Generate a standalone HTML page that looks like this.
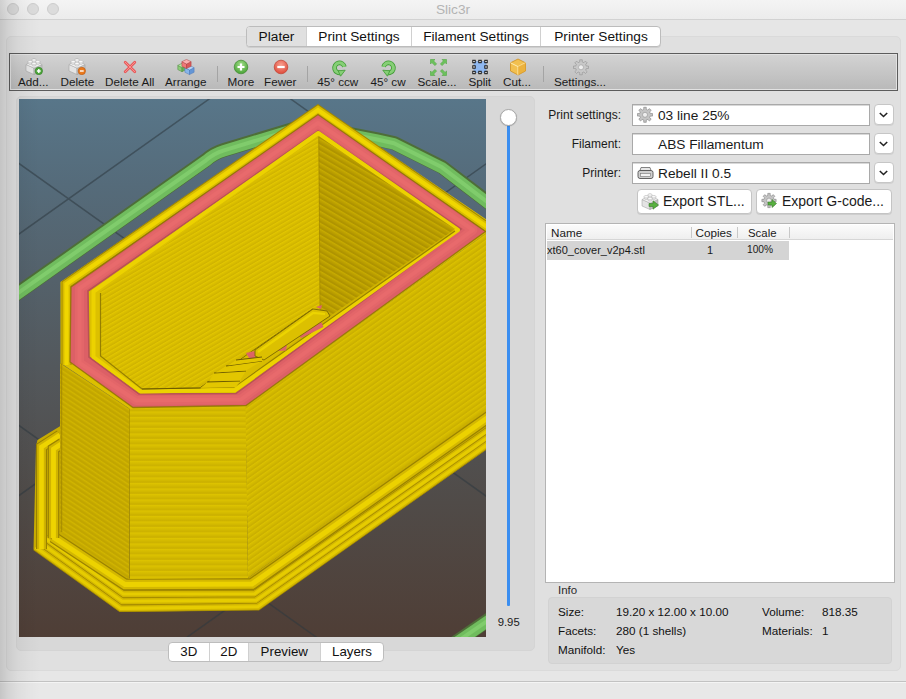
<!DOCTYPE html>
<html><head><meta charset="utf-8">
<style>
*{box-sizing:border-box;margin:0;padding:0}
html,body{width:906px;height:699px;overflow:hidden;background:#e6e6e6;font-family:"Liberation Sans",sans-serif;color:#1a1a1a}
.abs{position:absolute}
#title{left:0;top:0;width:906px;height:20px;background:linear-gradient(#f4f4f4,#ececec);border-bottom:1px solid #d2d2d2}
.tl{position:absolute;top:3px;width:12px;height:12px;border-radius:50%;background:#dcdcdc;border:1px solid #cdcdcd}
#ttext{left:0;width:906px;top:3px;text-align:center;font-size:13.7px;color:#b4b4b4;line-height:14px}
#lshadow{left:0;top:0;width:40px;height:699px;background:linear-gradient(90deg,rgba(0,0,0,.15) 0,rgba(0,0,0,.09) 8px,rgba(0,0,0,.045) 18px,rgba(0,0,0,.015) 30px,rgba(0,0,0,0) 40px);pointer-events:none}
#outer{left:6px;top:36px;width:895px;height:635px;background:#e0e0e0;border:1px solid #dadada;border-radius:5px}
#tabs{left:246px;top:26px;width:414.5px;height:21px;background:#fff;border:1px solid #bcbcbc;border-radius:4px;overflow:hidden;box-shadow:0 1px 0 rgba(0,0,0,.08)}
.tab{position:absolute;top:0;height:19px;font-size:13.7px;line-height:19px;text-align:center;color:#111;border-left:1px solid #d0d0d0}
#toolbar{left:9px;top:53px;width:889px;height:38px;border:1.5px solid #5c5c5c;background:linear-gradient(#d3d3d3,#b9b9b9);box-shadow:inset 0 0 0 1px #e2e2e2}
.tlab{position:absolute;top:75px;font-size:11.7px;line-height:14px;color:#1a1a1a;white-space:nowrap}
.sep{position:absolute;top:66px;width:1px;height:16px;background:#a4a4a4}
#inner{left:16px;top:96px;width:519px;height:555px;background:#d8d8d8;border:1px solid #d4d4d4;border-radius:5px}
#vp{left:19px;top:99px;width:467px;height:538px}
#seg{left:168px;top:642px;width:216px;height:20px;background:#fff;border:1px solid #bdbdbd;border-radius:4px;overflow:hidden}
.sg{position:absolute;top:0;height:18px;font-size:13.3px;line-height:18px;text-align:center;color:#111;border-left:1px solid #d0d0d0}
#bline{left:0;top:681px;width:906px;height:2px;background:linear-gradient(#c2c2c2 50%,#f4f4f4 50%)}
#bottom{left:0;top:683px;width:906px;height:16px;background:#e8e8e8}
.lbl{position:absolute;font-size:12px;line-height:14px;text-align:right;color:#1a1a1a;white-space:nowrap}
.combo{position:absolute;left:632px;width:238px;height:22px;background:#fff;border:1px solid #a9a9a9;box-shadow:inset 0 1px 0 #d8d8d8;font-size:13.7px;line-height:20px;white-space:nowrap}
.ddb{position:absolute;left:873.5px;width:20px;height:21px;background:#fff;border:1px solid #c6c6c6;border-radius:4px;box-shadow:0 1px 0 rgba(0,0,0,.06)}
.btn{position:absolute;top:190px;height:23px;background:#fff;border:1px solid #c4c4c4;border-radius:4px;box-shadow:0 1px 0 rgba(0,0,0,.08);font-size:14px;line-height:22px;white-space:nowrap}
#list{left:545px;top:223px;width:350px;height:360px;background:#fff;border:1px solid #b4b4b4}
.hd{position:absolute;top:241px;height:1px}
.inf{position:absolute;font-size:11.7px;line-height:14px;color:#111;white-space:nowrap}
</style></head><body>
<div id="title" class="abs">
 <div class="tl" style="left:7px"></div><div class="tl" style="left:27px"></div><div class="tl" style="left:47px"></div>
 <div id="ttext" class="abs">Slic3r</div>
</div>
<div id="outer" class="abs"></div>
<div id="tabs" class="abs">
 <div class="tab" style="left:0;width:59px;background:#e0e0e0;border-left:none">Plater</div>
 <div class="tab" style="left:59px;width:105px">Print Settings</div>
 <div class="tab" style="left:164px;width:129px">Filament Settings</div>
 <div class="tab" style="left:293px;width:121px">Printer Settings</div>
</div>
<div id="toolbar" class="abs"></div>
<svg class="abs" style="left:25px;top:57.5px" width="18" height="17" viewBox="0 0 18 17">
<path d="M1,6.5 L9,10 L9,16.5 L1,13Z" fill="#e4e4e4" stroke="#9a9a9a" stroke-width="0.5"/>
<path d="M9,10 L17,6.5 L17,13 L9,16.5Z" fill="#c4c4c4" stroke="#9a9a9a" stroke-width="0.5"/>
<path d="M1,6.5 L9,3 L17,6.5 L9,10Z" fill="#f6f6f6" stroke="#a8a8a8" stroke-width="0.5"/>
<path d="M6.9,3.6 V2.0 A2.1,1.1 0 0 1 11.1,2.0 V3.6 A2.1,1.1 0 0 1 6.9,3.6Z" fill="#e8e8e8" stroke="#a0a0a0" stroke-width="0.45"/><ellipse cx="9" cy="2.0" rx="2.1" ry="1.1" fill="#fdfdfd" stroke="#b0b0b0" stroke-width="0.4"/><path d="M3.1,5.3 V3.6999999999999997 A2.1,1.1 0 0 1 7.300000000000001,3.6999999999999997 V5.3 A2.1,1.1 0 0 1 3.1,5.3Z" fill="#e8e8e8" stroke="#a0a0a0" stroke-width="0.45"/><ellipse cx="5.2" cy="3.6999999999999997" rx="2.1" ry="1.1" fill="#fdfdfd" stroke="#b0b0b0" stroke-width="0.4"/><path d="M10.700000000000001,5.3 V3.6999999999999997 A2.1,1.1 0 0 1 14.9,3.6999999999999997 V5.3 A2.1,1.1 0 0 1 10.700000000000001,5.3Z" fill="#e8e8e8" stroke="#a0a0a0" stroke-width="0.45"/><ellipse cx="12.8" cy="3.6999999999999997" rx="2.1" ry="1.1" fill="#fdfdfd" stroke="#b0b0b0" stroke-width="0.4"/><path d="M6.9,7.0 V5.4 A2.1,1.1 0 0 1 11.1,5.4 V7.0 A2.1,1.1 0 0 1 6.9,7.0Z" fill="#e8e8e8" stroke="#a0a0a0" stroke-width="0.45"/><ellipse cx="9" cy="5.4" rx="2.1" ry="1.1" fill="#fdfdfd" stroke="#b0b0b0" stroke-width="0.4"/><circle cx="13.8" cy="13" r="3.7" fill="#4fa83c" stroke="#2f7a24" stroke-width="0.6"/><path d="M11.9,13 H15.7 M13.8,11.1 V14.9" stroke="#fff" stroke-width="1.4"/></svg>
<svg class="abs" style="left:68px;top:57.5px" width="18" height="17" viewBox="0 0 18 17">
<path d="M1,6.5 L9,10 L9,16.5 L1,13Z" fill="#e4e4e4" stroke="#9a9a9a" stroke-width="0.5"/>
<path d="M9,10 L17,6.5 L17,13 L9,16.5Z" fill="#c4c4c4" stroke="#9a9a9a" stroke-width="0.5"/>
<path d="M1,6.5 L9,3 L17,6.5 L9,10Z" fill="#f6f6f6" stroke="#a8a8a8" stroke-width="0.5"/>
<path d="M6.9,3.6 V2.0 A2.1,1.1 0 0 1 11.1,2.0 V3.6 A2.1,1.1 0 0 1 6.9,3.6Z" fill="#e8e8e8" stroke="#a0a0a0" stroke-width="0.45"/><ellipse cx="9" cy="2.0" rx="2.1" ry="1.1" fill="#fdfdfd" stroke="#b0b0b0" stroke-width="0.4"/><path d="M3.1,5.3 V3.6999999999999997 A2.1,1.1 0 0 1 7.300000000000001,3.6999999999999997 V5.3 A2.1,1.1 0 0 1 3.1,5.3Z" fill="#e8e8e8" stroke="#a0a0a0" stroke-width="0.45"/><ellipse cx="5.2" cy="3.6999999999999997" rx="2.1" ry="1.1" fill="#fdfdfd" stroke="#b0b0b0" stroke-width="0.4"/><path d="M10.700000000000001,5.3 V3.6999999999999997 A2.1,1.1 0 0 1 14.9,3.6999999999999997 V5.3 A2.1,1.1 0 0 1 10.700000000000001,5.3Z" fill="#e8e8e8" stroke="#a0a0a0" stroke-width="0.45"/><ellipse cx="12.8" cy="3.6999999999999997" rx="2.1" ry="1.1" fill="#fdfdfd" stroke="#b0b0b0" stroke-width="0.4"/><path d="M6.9,7.0 V5.4 A2.1,1.1 0 0 1 11.1,5.4 V7.0 A2.1,1.1 0 0 1 6.9,7.0Z" fill="#e8e8e8" stroke="#a0a0a0" stroke-width="0.45"/><ellipse cx="9" cy="5.4" rx="2.1" ry="1.1" fill="#fdfdfd" stroke="#b0b0b0" stroke-width="0.4"/><circle cx="13.8" cy="13" r="3.7" fill="#ea7a1c" stroke="#b85810" stroke-width="0.6"/><path d="M11.9,13 H15.7" stroke="#fff" stroke-width="1.4"/></svg>
<svg class="abs" style="left:123px;top:60px" width="14" height="14" viewBox="0 0 14 14"><path d="M2.2,2.2 L11.8,11.8 M11.8,2.2 L2.2,11.8" stroke="#e85a5a" stroke-width="2.8" stroke-linecap="round"/><path d="M2.2,2.2 L11.8,11.8 M11.8,2.2 L2.2,11.8" stroke="#f89090" stroke-width="1" stroke-linecap="round"/></svg>
<svg class="abs" style="left:177px;top:59px" width="19" height="17" viewBox="0 0 19 17"><path d="M5,8.5 L0.7999999999999998,6.4 L0.7999999999999998,10.6 L5,12.7Z" fill="#8ccc78" stroke="#4a8a3a" stroke-width="0.5"/><path d="M5,8.5 L9.2,6.4 L9.2,10.6 L5,12.7Z" fill="#6aae58" stroke="#4a8a3a" stroke-width="0.5"/><path d="M5,8.5 L0.7999999999999998,6.4 L5,4.3 L9.2,6.4Z" fill="#b8e6a8" stroke="#4a8a3a" stroke-width="0.5"/><path d="M12.5,11 L7.9,8.7 L7.9,13.3 L12.5,15.6Z" fill="#88b6ea" stroke="#4a78b8" stroke-width="0.5"/><path d="M12.5,11 L17.1,8.7 L17.1,13.3 L12.5,15.6Z" fill="#6496d6" stroke="#4a78b8" stroke-width="0.5"/><path d="M12.5,11 L7.9,8.7 L12.5,6.4 L17.1,8.7Z" fill="#b4d4f6" stroke="#4a78b8" stroke-width="0.5"/><path d="M9.5,5 L4.9,2.7 L4.9,7.3 L9.5,9.6Z" fill="#f07878" stroke="#b04040" stroke-width="0.5"/><path d="M9.5,5 L14.1,2.7 L14.1,7.3 L9.5,9.6Z" fill="#d85858" stroke="#b04040" stroke-width="0.5"/><path d="M9.5,5 L4.9,2.7 L9.5,0.40000000000000036 L14.1,2.7Z" fill="#fab0b0" stroke="#b04040" stroke-width="0.5"/></svg>
<div class="sep" style="left:217px"></div>
<svg class="abs" style="left:233px;top:59px" width="16" height="16" viewBox="0 0 16 16"><defs><radialGradient id="gm" cx="0.5" cy="0.35" r="0.6"><stop offset="0" stop-color="#a6e08e"/><stop offset="1" stop-color="#4ea63a"/></radialGradient></defs><circle cx="8" cy="8" r="6.8" fill="url(#gm)" stroke="#3f8a30" stroke-width="0.7"/><path d="M4.5,8 H11.5 M8,4.5 V11.5" stroke="#fff" stroke-width="2.2"/></svg>
<svg class="abs" style="left:273px;top:59px" width="16" height="16" viewBox="0 0 16 16"><defs><radialGradient id="rm" cx="0.5" cy="0.35" r="0.6"><stop offset="0" stop-color="#f8a090"/><stop offset="1" stop-color="#e05040"/></radialGradient></defs><circle cx="8" cy="8" r="6.8" fill="url(#rm)" stroke="#c04030" stroke-width="0.7"/><path d="M4.3,8 H11.7" stroke="#fff" stroke-width="2.2"/></svg>
<div class="sep" style="left:307px"></div>
<svg class="abs" style="left:331px;top:59.5px" width="16" height="17" viewBox="0 0 16 17"><path d="M13.4,6.8 A5,5 0 1 0 10.1,12.6" stroke="#3f9a34" stroke-width="4.6" fill="none"/><path d="M13.4,6.8 A5,5 0 1 0 10.1,12.6" stroke="#86cf76" stroke-width="3" fill="none"/><path d="M7.2,10.8 L14.2,10.2 L9.6,16.2Z" fill="#86cf76" stroke="#3f9a34" stroke-width="0.8" stroke-linejoin="round"/></svg>
<svg class="abs" style="left:381px;top:59.5px" width="16" height="17" viewBox="0 0 16 17"><g transform="translate(16,0) scale(-1,1)"><path d="M13.4,6.8 A5,5 0 1 0 10.1,12.6" stroke="#3f9a34" stroke-width="4.6" fill="none"/><path d="M13.4,6.8 A5,5 0 1 0 10.1,12.6" stroke="#86cf76" stroke-width="3" fill="none"/><path d="M7.2,10.8 L14.2,10.2 L9.6,16.2Z" fill="#86cf76" stroke="#3f9a34" stroke-width="0.8" stroke-linejoin="round"/></g></svg>
<svg class="abs" style="left:429.5px;top:58.5px" width="17" height="17" viewBox="0 0 17 17">
<g><path d="M0.5,0.5 H5 L3.6,1.9 L6.6,4.9 L4.9,6.6 L1.9,3.6 L0.5,5Z" fill="#6cc25c" stroke="#52a844" stroke-width="0.6" stroke-linejoin="round"/></g><g transform="translate(17,0) scale(-1,1)"><path d="M0.5,0.5 H5 L3.6,1.9 L6.6,4.9 L4.9,6.6 L1.9,3.6 L0.5,5Z" fill="#6cc25c" stroke="#52a844" stroke-width="0.6" stroke-linejoin="round"/></g><g transform="translate(0,17) scale(1,-1)"><path d="M0.5,0.5 H5 L3.6,1.9 L6.6,4.9 L4.9,6.6 L1.9,3.6 L0.5,5Z" fill="#6cc25c" stroke="#52a844" stroke-width="0.6" stroke-linejoin="round"/></g><g transform="translate(17,17) scale(-1,-1)"><path d="M0.5,0.5 H5 L3.6,1.9 L6.6,4.9 L4.9,6.6 L1.9,3.6 L0.5,5Z" fill="#6cc25c" stroke="#52a844" stroke-width="0.6" stroke-linejoin="round"/></g></svg>
<svg class="abs" style="left:472px;top:59px" width="16" height="16" viewBox="0 0 16 16"><rect x="2" y="2.5" width="12" height="11" fill="#8fb8f0" stroke="#6a90c8" stroke-width="0.5"/>
<g fill="#fff" stroke="#111" stroke-width="1"><rect x="0.8" y="1.3" width="2.4" height="2.4"/><rect x="6.8" y="1.3" width="2.4" height="2.4"/><rect x="12.8" y="1.3" width="2.4" height="2.4"/><rect x="0.8" y="6.8" width="2.4" height="2.4"/><rect x="12.8" y="6.8" width="2.4" height="2.4"/><rect x="0.8" y="12.3" width="2.4" height="2.4"/><rect x="6.8" y="12.3" width="2.4" height="2.4"/><rect x="12.8" y="12.3" width="2.4" height="2.4"/></g></svg>
<svg class="abs" style="left:509px;top:58px" width="18" height="18" viewBox="0 0 18 18"><path d="M9,1 L16.5,4.8 L16.5,13 L9,17 L1.5,13 L1.5,4.8Z" fill="#f2c050" stroke="#d09020" stroke-width="0.8"/><path d="M1.5,4.8 L9,8.6 L16.5,4.8 M9,8.6 V17" stroke="#fff2c0" stroke-width="0.9" fill="none"/><path d="M9,8.6 L16.5,4.8 L16.5,13 L9,17Z" fill="#e8a830" opacity="0.6"/></svg>
<div class="sep" style="left:543px"></div>
<svg class="abs" style="left:0;top:0;overflow:visible" width="1" height="1"><path d="M588.49,66.01 L588.49,68.59 L586.34,68.51 L585.63,70.22 L587.21,71.69 L585.39,73.51 L583.92,71.93 L582.21,72.64 L582.29,74.79 L579.71,74.79 L579.79,72.64 L578.08,71.93 L576.61,73.51 L574.79,71.69 L576.37,70.22 L575.66,68.51 L573.51,68.59 L573.51,66.01 L575.66,66.09 L576.37,64.38 L574.79,62.91 L576.61,61.09 L578.08,62.67 L579.79,61.96 L579.71,59.81 L582.29,59.81 L582.21,61.96 L583.92,62.67 L585.39,61.09 L587.21,62.91 L585.63,64.38 L586.34,66.09Z" fill="#c8c8c8" stroke="#9a9a9a" stroke-width="0.7"/><circle cx="581" cy="67.3" r="2.51" fill="#eeeeee" stroke="#9a9a9a" stroke-width="0.6"/></svg>
<div class="tlab" style="left:17px;width:32.5px;text-align:center">Add...</div>
<div class="tlab" style="left:60.5px;width:33px;text-align:center">Delete</div>
<div class="tlab" style="left:105px;width:49px;text-align:center">Delete All</div>
<div class="tlab" style="left:165px;width:41px;text-align:center">Arrange</div>
<div class="tlab" style="left:227.5px;width:26.5px;text-align:center">More</div>
<div class="tlab" style="left:264px;width:32.5px;text-align:center">Fewer</div>
<div class="tlab" style="left:316.5px;width:42.5px;text-align:center">45° ccw</div>
<div class="tlab" style="left:370px;width:36px;text-align:center">45° cw</div>
<div class="tlab" style="left:417.5px;width:38px;text-align:center">Scale...</div>
<div class="tlab" style="left:468px;width:23.5px;text-align:center">Split</div>
<div class="tlab" style="left:502px;width:30px;text-align:center">Cut...</div>
<div class="tlab" style="left:553px;width:54px;text-align:center">Settings...</div>
<div id="inner" class="abs"></div>
<svg id="vp" class="abs" viewBox="19 99 467 538" width="467" height="538">
<defs>
<linearGradient id="bg" x1="0" y1="99" x2="0" y2="637" gradientUnits="userSpaceOnUse">
<stop offset="0" stop-color="#587689"/><stop offset="0.16" stop-color="#556b7a"/><stop offset="0.5" stop-color="#53585c"/><stop offset="0.75" stop-color="#504b48"/><stop offset="1" stop-color="#4f3e36"/>
</linearGradient>
<pattern id="stH" width="50" height="5.5" patternUnits="userSpaceOnUse" patternTransform="translate(0,405) skewY(0.00)">
<rect width="50" height="5.5" fill="url(#stHg)"/></pattern>
<linearGradient id="stHg" x1="0" y1="0" x2="0" y2="1">
<stop offset="0" stop-color="#c2a600"/><stop offset="0.2" stop-color="#dec400"/><stop offset="0.7" stop-color="#d2b800"/><stop offset="0.88" stop-color="#d2b800"/><stop offset="1" stop-color="#c2a600"/></linearGradient>
<pattern id="stR" width="50" height="5.5" patternUnits="userSpaceOnUse" patternTransform="translate(0,405) skewY(-35.15)">
<rect width="50" height="5.5" fill="url(#stRg)"/></pattern>
<linearGradient id="stRg" x1="0" y1="0" x2="0" y2="1">
<stop offset="0" stop-color="#c0a400"/><stop offset="0.2" stop-color="#dcc200"/><stop offset="0.7" stop-color="#d0b600"/><stop offset="0.88" stop-color="#d0b600"/><stop offset="1" stop-color="#c0a400"/></linearGradient>
<pattern id="stL" width="50" height="5.0" patternUnits="userSpaceOnUse" patternTransform="translate(0,363) skewY(33.42)">
<rect width="50" height="5.0" fill="url(#stLg)"/></pattern>
<linearGradient id="stLg" x1="0" y1="0" x2="0" y2="1">
<stop offset="0" stop-color="#b29600"/><stop offset="0.2" stop-color="#d4b800"/><stop offset="0.7" stop-color="#c4a800"/><stop offset="0.88" stop-color="#c4a800"/><stop offset="1" stop-color="#b29600"/></linearGradient>
<pattern id="stIL" width="50" height="4.6" patternUnits="userSpaceOnUse" patternTransform="translate(0,0) skewY(-30.11)">
<rect width="50" height="4.6" fill="url(#stILg)"/></pattern>
<linearGradient id="stILg" x1="0" y1="0" x2="0" y2="1">
<stop offset="0" stop-color="#bc9f00"/><stop offset="0.2" stop-color="#e4c800"/><stop offset="0.7" stop-color="#d8bc00"/><stop offset="0.88" stop-color="#d8bc00"/><stop offset="1" stop-color="#bc9f00"/></linearGradient>
<pattern id="stIR" width="50" height="6.0" patternUnits="userSpaceOnUse" patternTransform="translate(0,0) skewY(30.11)">
<rect width="50" height="6.0" fill="url(#stIRg)"/></pattern>
<linearGradient id="stIRg" x1="0" y1="0" x2="0" y2="1">
<stop offset="0" stop-color="#9e8400"/><stop offset="0.2" stop-color="#c8ac00"/><stop offset="0.7" stop-color="#b69a00"/><stop offset="0.88" stop-color="#b69a00"/><stop offset="1" stop-color="#9e8400"/></linearGradient>
</defs>
<rect x="19" y="99" width="467" height="538" fill="url(#bg)"/>
<path d="M0,-108 L520,262.2 M0,150 L520,520.2 M0,412 L520,782.2 M0,247.5 L520,-121.7 M0,509 L520,139.8 M0,770 L520,400.8" stroke="#2e3840" stroke-opacity="0.55" stroke-width="1.5" fill="none"/>
<path d="M5,302 L206,160 Q214,153 224,150 L300,127 L340,132 L376,139 L394,143 L442,167 L510,219" stroke="#4e6e38" stroke-width="14" fill="none" stroke-linejoin="round"/>
<path d="M5,302 L206,160 Q214,153 224,150 L300,127 L340,132 L376,139 L394,143 L442,167 L510,219" stroke="#70bc5e" stroke-width="11.5" fill="none" stroke-linejoin="round" transform="translate(0,0.8)"/>
<path d="M5,302 L206,160 Q214,153 224,150 L300,127 L340,132 L376,139 L394,143 L442,167 L510,219" stroke="#80cc6c" stroke-width="4" fill="none" stroke-linejoin="round" transform="translate(0,0.3)"/>
<path d="M430,660 L500,612" stroke="#4e6e38" stroke-width="14" fill="none"/>
<path d="M430,660 L500,612" stroke="#70bc5e" stroke-width="11.5" fill="none" transform="translate(0,0.8)"/>
<path d="M430,660 L500,612" stroke="#80cc6c" stroke-width="4" fill="none" transform="translate(0,0.3)"/>
<polygon points="37.5,440.0 62.0,425.0 62.0,530.0 129.0,578.0 248.0,578.0 500.0,399.0 500.0,440.0 258.5,610.0 120.0,612.0 33.5,549.5 36.0,446.0" fill="#c8ac00"/>
<path d="M45.1,538.2 L123.3,594.0 L254.8,593.7 L500.0,422.0" stroke="#a48a00" stroke-width="7.4" fill="none" stroke-linejoin="miter" /><path d="M45.1,538.2 L123.3,594.0 L254.8,593.7 L500.0,422.0" stroke="#d2b600" stroke-width="5.92" fill="none" stroke-linejoin="miter" /><path d="M45.1,538.2 L123.3,594.0 L254.8,593.7 L500.0,422.0" stroke="#e6cc00" stroke-width="3.11" fill="none" stroke-linejoin="miter" />
<path d="M40.4,542.8 L122.0,601.2 L256.2,600.2 L500.0,428.8" stroke="#a48a00" stroke-width="7.4" fill="none" stroke-linejoin="miter" /><path d="M40.4,542.8 L122.0,601.2 L256.2,600.2 L500.0,428.8" stroke="#d2b600" stroke-width="5.92" fill="none" stroke-linejoin="miter" /><path d="M40.4,542.8 L122.0,601.2 L256.2,600.2 L500.0,428.8" stroke="#e6cc00" stroke-width="3.11" fill="none" stroke-linejoin="miter" />
<path d="M35.6,547.2 L120.7,608.4 L257.8,606.7 L500.0,435.6" stroke="#a48a00" stroke-width="7.4" fill="none" stroke-linejoin="miter" /><path d="M35.6,547.2 L120.7,608.4 L257.8,606.7 L500.0,435.6" stroke="#d2b600" stroke-width="5.92" fill="none" stroke-linejoin="miter" /><path d="M35.6,547.2 L120.7,608.4 L257.8,606.7 L500.0,435.6" stroke="#e6cc00" stroke-width="3.11" fill="none" stroke-linejoin="miter" />
<path d="M41.5,549 L41.5,447 L60,435" stroke="#9a8200" stroke-width="11" fill="none" stroke-linejoin="miter" /><path d="M41.5,549 L41.5,447 L60,435" stroke="#d0b400" stroke-width="8.80" fill="none" stroke-linejoin="miter" /><path d="M41.5,549 L41.5,447 L60,435" stroke="#eed400" stroke-width="4.62" fill="none" stroke-linejoin="miter" />
<path d="M53,537 L125,584.5 L252,584 L500,409" stroke="#9a8200" stroke-width="12" fill="none" stroke-linejoin="miter" /><path d="M53,537 L125,584.5 L252,584 L500,409" stroke="#d4b800" stroke-width="9.60" fill="none" stroke-linejoin="miter" /><path d="M53,537 L125,584.5 L252,584 L500,409" stroke="#ecd200" stroke-width="5.04" fill="none" stroke-linejoin="miter" />
<path d="M53.5,538 L53.5,449 L62,443.5" stroke="#9a8200" stroke-width="11.5" fill="none" stroke-linejoin="miter" /><path d="M53.5,538 L53.5,449 L62,443.5" stroke="#d0b400" stroke-width="9.20" fill="none" stroke-linejoin="miter" /><path d="M53.5,538 L53.5,449 L62,443.5" stroke="#eed400" stroke-width="4.83" fill="none" stroke-linejoin="miter" />
<polygon points="60.0,363.0 130.0,409.0 129.0,579.0 60.0,532.0" fill="url(#stL)"/>
<polygon points="129.5,408.0 246.0,406.0 248.0,578.0 129.5,579.0" fill="url(#stH)"/>
<polygon points="245.5,406.0 496.0,226.0 496.0,403.0 248.0,578.0" fill="url(#stR)"/>
<path d="M129.5,408 L129.5,579" stroke="#a88e00" stroke-width="1" opacity="0.6"/>
<path d="M61.5,363 L61.5,532" stroke="#a08600" stroke-width="1.5" opacity="0.7"/>
<polygon points="60.5,282.0 318.0,105.0 496.0,226.0 246.0,406.0 130.0,409.0 60.5,363.0" fill="#dcc000"/>
<path d="M66.5,365 L66.5,284 L318,110 L500,236" stroke="#a08700" stroke-width="10" fill="none" stroke-linejoin="miter" /><path d="M66.5,365 L66.5,284 L318,110 L500,236" stroke="#d8bc00" stroke-width="8.00" fill="none" stroke-linejoin="miter" /><path d="M66.5,365 L66.5,284 L318,110 L500,236" stroke="#f0d600" stroke-width="4.20" fill="none" stroke-linejoin="miter" />
<polygon points="71.0,287.0 318.0,114.5 485.5,231.5 246.0,405.5 133.0,407.5 70.0,362.0" fill="#dc6066"/>
<path d="M79.5,363 L79.5,288.5 L318,122.8 L473,230 L241,399.5 L136,400.5 Z" stroke="#e36669" stroke-width="9" fill="none" stroke-linejoin="round"/>
<path d="M79.5,363 L79.5,288.5 L318,122.8 L473,230 L241,399.5 L136,400.5 Z" stroke="#e86a6c" stroke-width="4" fill="none" stroke-linejoin="round"/>
<polygon points="71.0,287.0 318.0,114.5 485.5,231.5 246.0,405.5 133.0,407.5 70.0,362.0" fill="none" stroke="#8c7200" stroke-width="1.3" stroke-opacity="0.8"/>
<polygon points="88.0,291.0 318.0,131.0 461.0,229.0 236.0,393.5 139.0,394.0 89.0,357.0" fill="#dcc000" stroke="#b85254" stroke-width="1.6"/>
<path d="M93.5,357 L93.5,291.5 L318.3,133 L458,230 L235,390 L140.5,391.5 Z" stroke="#ecd200" stroke-width="4" fill="none" stroke-linejoin="round"/>
<polygon points="100.0,292.0 318.5,136.0 455.0,231.0 234.0,387.0 142.0,389.0 100.0,356.0" fill="#d0b400"/>
<polygon points="100.0,292.0 318.5,136.0 320.0,309.0 200.0,388.0 142.0,389.0 100.0,356.0" fill="url(#stIL)"/>
<polygon points="318.5,136.0 455.0,229.0 320.0,323.0" fill="url(#stIR)"/>
<path d="M100.5,293 L100.5,356 L142,389 L234,387 L455,231" stroke="#8a7400" stroke-width="1.2" fill="none" opacity="0.85"/>
<path d="M142,389 L200,388 L313,309" stroke="#6e5c00" stroke-width="1.2" fill="none"/>
<path d="M318.8,137 L320,309" stroke="#a08600" stroke-width="1" fill="none" opacity="0.6"/>
<polygon points="200.0,388.0 313.0,309.0 320.0,309.0 320.0,323.0 234.0,387.0" fill="#d8bc00"/>
<polygon points="246.0,353.0 254.6,351.0 256.0,358.7 249.6,359.0" fill="#dc6468"/>
<polygon points="277.8,344.7 287.7,341.0 286.0,350.5 277.0,351.0" fill="#dc6468"/>
<polygon points="297.6,333.0 320.8,321.0 323.5,327.0 301.0,338.0" fill="#dc6468"/>
<polygon points="316.0,307.0 322.0,305.0 321.0,309.0" fill="#dc6468"/>
<polygon points="255.0,350.0 313.0,309.0 327.0,311.0 330.0,316.0 264.0,360.0 255.0,356.0" fill="#dcc000" stroke="#7a6600" stroke-width="0.9"/>
<path d="M258,352 L313,313 L325,314" stroke="#ecd400" stroke-width="2.2" fill="none"/>
<polygon points="202.0,387.5 236.0,387.0 240.0,381.0 207.0,382.0" fill="#e2c600"/>
<path d="M207,382 L240,381" stroke="#6e5c00" stroke-width="1" fill="none"/>
<polygon points="209.0,381.0 240.0,380.5 246.0,371.0 214.0,373.0" fill="#e2c600"/>
<path d="M214,373 L246,371" stroke="#6e5c00" stroke-width="1" fill="none"/>
<polygon points="216.0,372.5 246.0,370.5 262.0,361.0 226.0,366.0" fill="#e2c600"/>
<path d="M226,366 L262,361" stroke="#6e5c00" stroke-width="1" fill="none"/>
<polygon points="228.0,365.5 262.0,361.0 262.0,357.0 236.0,360.0" fill="#e2c600"/>
<path d="M236,360 L262,357" stroke="#6e5c00" stroke-width="1" fill="none"/>
</svg>
<div class="abs" style="left:507px;top:118px;width:3px;height:488px;background:#3b8ef0;border-radius:1px"></div>
<div class="abs" style="left:500px;top:109px;width:17px;height:17px;border-radius:50%;background:#fff;border:1px solid #a8a8a8;box-shadow:0 0.5px 1px rgba(0,0,0,.2)"></div>
<div class="abs" style="left:497.7px;top:615px;font-size:11.3px;line-height:14px">9.95</div>
<div id="seg" class="abs">
 <div class="sg" style="left:0;width:39.5px;border-left:none">3D</div>
 <div class="sg" style="left:39.5px;width:39.5px">2D</div>
 <div class="sg" style="left:79px;width:71.5px;background:#e2e2e2">Preview</div>
 <div class="sg" style="left:150.5px;width:64px">Layers</div>
</div>
<div class="lbl" style="left:520px;width:101px;top:108px">Print settings:</div>
<div class="lbl" style="left:520px;width:101px;top:137px">Filament:</div>
<div class="lbl" style="left:520px;width:101px;top:166px">Printer:</div>
<div class="combo" style="top:104px;padding-left:25px;padding-top:1px">03 line 25%</div>
<div class="ddb" style="top:104px"><svg width="17" height="18" viewBox="0 0 17 18"><path d="M4.8,8 L8.5,11.5 L12.2,8" stroke="#222" stroke-width="1.6" fill="none"/></svg></div>
<div class="combo" style="top:133px;padding-left:25px;padding-top:1px">ABS Fillamentum</div>
<div class="ddb" style="top:133px"><svg width="17" height="18" viewBox="0 0 17 18"><path d="M4.8,8 L8.5,11.5 L12.2,8" stroke="#222" stroke-width="1.6" fill="none"/></svg></div>
<div class="combo" style="top:162px;padding-left:25px;padding-top:1px">Rebell II 0.5</div>
<div class="ddb" style="top:162px"><svg width="17" height="18" viewBox="0 0 17 18"><path d="M4.8,8 L8.5,11.5 L12.2,8" stroke="#222" stroke-width="1.6" fill="none"/></svg></div>
<svg class="abs" style="left:0;top:0;overflow:visible" width="1" height="1"><path d="M652.49,113.51 L652.49,116.09 L650.34,116.01 L649.63,117.72 L651.21,119.19 L649.39,121.01 L647.92,119.43 L646.21,120.14 L646.29,122.29 L643.71,122.29 L643.79,120.14 L642.08,119.43 L640.61,121.01 L638.79,119.19 L640.37,117.72 L639.66,116.01 L637.51,116.09 L637.51,113.51 L639.66,113.59 L640.37,111.88 L638.79,110.41 L640.61,108.59 L642.08,110.17 L643.79,109.46 L643.71,107.31 L646.29,107.31 L646.21,109.46 L647.92,110.17 L649.39,108.59 L651.21,110.41 L649.63,111.88 L650.34,113.59Z" fill="#c4c4c4" stroke="#8c8c8c" stroke-width="0.7"/><circle cx="645" cy="114.8" r="2.51" fill="#eeeeee" stroke="#8c8c8c" stroke-width="0.6"/></svg>
<svg class="abs" style="left:637px;top:166px" width="17" height="14" viewBox="0 0 17 14"><path d="M4,1.5 H13 L14,4.5 H3Z" fill="#e6e6e6" stroke="#666" stroke-width="0.8"/><rect x="1" y="4.5" width="15" height="8" rx="2" fill="#d0d0d0" stroke="#555" stroke-width="0.9"/><rect x="3.5" y="7.5" width="10" height="3" fill="#f4f4f4" stroke="#777" stroke-width="0.6"/></svg>
<div class="btn" style="left:637px;width:115px;padding-left:25px;top:189px;height:24.5px;line-height:22px">Export STL...</div>
<div class="btn" style="left:756px;width:136px;padding-left:25px;top:189px;height:24.5px;line-height:22px">Export G-code...</div>
<svg class="abs" style="left:641px;top:192.5px" width="18" height="17" viewBox="0 0 18 17">
<path d="M1,6.5 L9,10 L9,16.5 L1,13Z" fill="#e4e4e4" stroke="#9a9a9a" stroke-width="0.5"/>
<path d="M9,10 L17,6.5 L17,13 L9,16.5Z" fill="#c4c4c4" stroke="#9a9a9a" stroke-width="0.5"/>
<path d="M1,6.5 L9,3 L17,6.5 L9,10Z" fill="#f6f6f6" stroke="#a8a8a8" stroke-width="0.5"/>
<path d="M6.9,3.6 V2.0 A2.1,1.1 0 0 1 11.1,2.0 V3.6 A2.1,1.1 0 0 1 6.9,3.6Z" fill="#e8e8e8" stroke="#a0a0a0" stroke-width="0.45"/><ellipse cx="9" cy="2.0" rx="2.1" ry="1.1" fill="#fdfdfd" stroke="#b0b0b0" stroke-width="0.4"/><path d="M3.1,5.3 V3.6999999999999997 A2.1,1.1 0 0 1 7.300000000000001,3.6999999999999997 V5.3 A2.1,1.1 0 0 1 3.1,5.3Z" fill="#e8e8e8" stroke="#a0a0a0" stroke-width="0.45"/><ellipse cx="5.2" cy="3.6999999999999997" rx="2.1" ry="1.1" fill="#fdfdfd" stroke="#b0b0b0" stroke-width="0.4"/><path d="M10.700000000000001,5.3 V3.6999999999999997 A2.1,1.1 0 0 1 14.9,3.6999999999999997 V5.3 A2.1,1.1 0 0 1 10.700000000000001,5.3Z" fill="#e8e8e8" stroke="#a0a0a0" stroke-width="0.45"/><ellipse cx="12.8" cy="3.6999999999999997" rx="2.1" ry="1.1" fill="#fdfdfd" stroke="#b0b0b0" stroke-width="0.4"/><path d="M6.9,7.0 V5.4 A2.1,1.1 0 0 1 11.1,5.4 V7.0 A2.1,1.1 0 0 1 6.9,7.0Z" fill="#e8e8e8" stroke="#a0a0a0" stroke-width="0.45"/><ellipse cx="9" cy="5.4" rx="2.1" ry="1.1" fill="#fdfdfd" stroke="#b0b0b0" stroke-width="0.4"/><path d="M8,10.5 H12 V7.8 L17.5,12 L12,16.2 V13.5 H8 Z" fill="#58b040" stroke="#3b7d2a" stroke-width="0.6"/></svg>
<svg class="abs" style="left:0;top:0;overflow:visible" width="1" height="1"><path d="M776.10,199.28 L776.10,201.72 L774.06,201.64 L773.38,203.27 L774.88,204.66 L773.16,206.38 L771.77,204.88 L770.14,205.56 L770.22,207.60 L767.78,207.60 L767.86,205.56 L766.23,204.88 L764.84,206.38 L763.12,204.66 L764.62,203.27 L763.94,201.64 L761.90,201.72 L761.90,199.28 L763.94,199.36 L764.62,197.73 L763.12,196.34 L764.84,194.62 L766.23,196.12 L767.86,195.44 L767.78,193.40 L770.22,193.40 L770.14,195.44 L771.77,196.12 L773.16,194.62 L774.88,196.34 L773.38,197.73 L774.06,199.36Z" fill="#c4c4c4" stroke="#8c8c8c" stroke-width="0.7"/><circle cx="769" cy="200.5" r="2.38" fill="#eeeeee" stroke="#8c8c8c" stroke-width="0.6"/><path d="M768,202.0 H772 V199.5 L776.5,203.5 L772,207.5 V205.0 H768 Z" fill="#58b040" stroke="#3b7d2a" stroke-width="0.6"/></svg>
<div id="list" class="abs"></div>
<div class="abs" style="left:547px;top:225px;width:346px;height:15px;background:linear-gradient(#fbfbfb,#efefef);border-bottom:1px solid #d6d6d6"></div>
<div class="abs" style="left:691px;top:227px;width:1px;height:11px;background:#c8c8c8"></div>
<div class="abs" style="left:737px;top:227px;width:1px;height:11px;background:#c8c8c8"></div>
<div class="abs" style="left:789px;top:227px;width:1px;height:11px;background:#c8c8c8"></div>
<div class="abs" style="left:547px;top:241px;width:242px;height:19px;background:#d4d4d4"></div>
<div class="abs" style="left:551px;top:226px;font-size:11.7px;line-height:14px">Name</div>
<div class="abs" style="left:695.5px;top:226px;font-size:11.7px;line-height:14px">Copies</div>
<div class="abs" style="left:748px;top:226px;font-size:11.4px;line-height:14px">Scale</div>
<div class="abs" style="left:547px;top:243px;font-size:11px;line-height:14px">xt60_cover_v2p4.stl</div>
<div class="abs" style="left:707px;top:243px;font-size:11px;line-height:14px">1</div>
<div class="abs" style="left:747px;top:243px;font-size:10.2px;line-height:14px">100%</div>
<div class="abs" style="left:558px;top:583px;font-size:11.5px;line-height:14px;color:#2a2a2a">Info</div>
<div class="abs" style="left:548px;top:597px;width:344px;height:67px;background:#d8d8d8;border:1px solid #d2d2d2;border-radius:4px"></div>
<div class="inf" style="left:558px;top:605px">Size:</div>
<div class="inf" style="left:616px;top:605px">19.20 x 12.00 x 10.00</div>
<div class="inf" style="left:762px;top:605px">Volume:</div>
<div class="inf" style="left:822px;top:605px">818.35</div>
<div class="inf" style="left:558px;top:624px">Facets:</div>
<div class="inf" style="left:616px;top:624px">280 (1 shells)</div>
<div class="inf" style="left:762px;top:624px">Materials:</div>
<div class="inf" style="left:822px;top:624px">1</div>
<div class="inf" style="left:558px;top:643px">Manifold:</div>
<div class="inf" style="left:616px;top:643px">Yes</div>
<div id="bline" class="abs"></div>
<div id="bottom" class="abs"></div>
<div id="lshadow" class="abs"></div>
</body></html>
